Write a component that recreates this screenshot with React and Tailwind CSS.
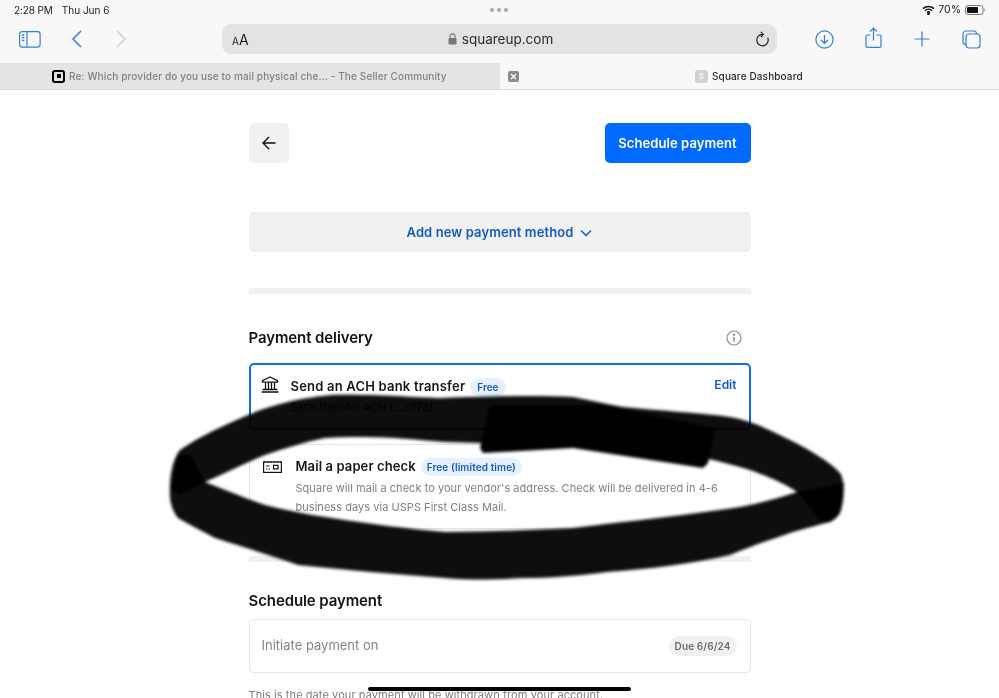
export default function App() {
  return (
    <div className="relative h-[698px] w-[999px] overflow-hidden bg-white font-['Inter',sans-serif]">
      {/* Browser chrome */}
      <header className="h-[90px] bg-[#f8f8f8] border-b border-[#d9d9d9] flex flex-col">
        <div className="h-[20px] pl-[14px] pr-[13px] flex items-center justify-between text-[10.5px] text-[#1c1c1c]">
          <div className="flex gap-[9px] w-[200px] text-[10px]"><span className="tracking-[-0.1px]">2:28 PM</span><span>Thu Jun 6</span></div>
          <div className="flex gap-[3px] -ml-[3px]">
            <span className="w-[4px] h-[4px] rounded-full bg-[#a8a8a8]" />
            <span className="w-[4px] h-[4px] rounded-full bg-[#a8a8a8]" />
            <span className="w-[4px] h-[4px] rounded-full bg-[#a8a8a8]" />
          </div>
          <div className="flex items-center justify-end gap-[3px] w-[200px]">
            <svg width="13" height="10" viewBox="0 0 13 10" fill="none" stroke="#111" strokeWidth="1.5">
              <path d="M1 3.6a8 8 0 0 1 11 0M3 5.7a5 5 0 0 1 7 0M5 7.6a2.2 2.2 0 0 1 3 0" />
              <circle cx="6.5" cy="9" r=".6" fill="#111" />
            </svg>
            <span>70%</span>
            <svg width="21" height="10" viewBox="0 0 21 10" className="ml-[1px]">
              <rect x=".5" y=".5" width="17.5" height="9" rx="2.5" fill="none" stroke="#777" />
              <rect x="2" y="2" width="11" height="6" rx="1" fill="#111" />
              <path d="M19.5 3.5c1 .3 1 2.7 0 3z" fill="#777" />
            </svg>
          </div>
        </div>
        <div className="h-[36px] mt-[1px] relative flex items-center">
          <div className="w-[222px] pl-[19px] flex items-center">
            <svg width="22" height="17" viewBox="0 0 22 17" fill="none" stroke="#2f80d8" strokeWidth="1.2">
              <rect x=".6" y=".6" width="20.5" height="15.5" rx="2.5" />
              <path d="M8 .6v15.5" />
              <path d="M2.8 4h2.6M2.8 6.7h2.6M2.8 9.4h2.6" strokeWidth="1.3" />
            </svg>
            <svg width="12" height="18" viewBox="0 0 12 18" fill="none" stroke="#2f80d8" strokeWidth="1.5" className="ml-[30px]">
              <path d="M10 1 2 9l8 8" />
            </svg>
            <svg width="12" height="18" viewBox="0 0 12 18" fill="none" stroke="#cfcfcf" strokeWidth="1.5" className="ml-[32px]">
              <path d="m2 1 8 8-8 8" />
            </svg>
          </div>
          <div className="w-[555px] h-[30px] rounded-[9px] bg-[#e3e3e3] flex items-center justify-between pl-[10px] pr-[8px] text-[#1f1f1f]">
            <span className="w-[60px] leading-none"><span className="text-[10px]">A</span><span className="text-[14px]">A</span></span>
            <span className="flex items-center gap-[5px] text-[13.5px] text-[#2b2b2b]">
              <svg width="9" height="12" viewBox="0 0 9 12">
                <path d="M2 5V3.4a2.5 2.5 0 0 1 5 0V5" fill="none" stroke="#777" strokeWidth="1.1" />
                <rect x="0.5" y="5" width="8" height="6.5" rx="1.2" fill="#777" />
              </svg>
              squareup.com
            </span>
            <span className="w-[60px] flex justify-end">
              <svg width="15" height="17" viewBox="0 0 15 17" fill="none" stroke="#222" strokeWidth="1.2">
                <path d="M8.5 3.4a5.7 5.7 0 1 0 5.2 3.4" />
                <path d="M6.8.8l2.6 2.6L6.8 6" />
              </svg>
            </span>
          </div>
          <div className="flex-1 flex items-center pl-[38px]">
            <svg width="19" height="19" viewBox="0 0 19 19" fill="none" stroke="#2f80d8" strokeWidth="1.2">
              <circle cx="9.5" cy="9.5" r="8.6" />
              <path d="M9.5 5v8.4M6 10l3.5 3.5L13 10" />
            </svg>
            <svg width="17" height="22" viewBox="0 0 17 22" fill="none" stroke="#2f80d8" strokeWidth="1.2" className="ml-[31px] -mt-[3px]">
              <path d="M8.5 13.5V1.4M5 4.6 8.5 1.2 12 4.6" />
              <path d="M5.5 8H2.6A1.6 1.6 0 0 0 1 9.6v9.2a1.6 1.6 0 0 0 1.6 1.6h11.8a1.6 1.6 0 0 0 1.6-1.6V9.6A1.6 1.6 0 0 0 14.4 8h-2.9" />
            </svg>
            <svg width="16" height="16" viewBox="0 0 16 16" fill="none" stroke="#2f80d8" strokeWidth="1.2" className="ml-[32px]">
              <path d="M8 .5v15M.5 8h15" />
            </svg>
            <svg width="19" height="19" viewBox="0 0 19 19" fill="none" stroke="#2f80d8" strokeWidth="1.2" className="ml-[32px]">
              <rect x="4" y="4" width="14" height="14" rx="3" />
              <path d="M4 14.6A3 3 0 0 1 1 11.6V4a3 3 0 0 1 3-3h7.6a3 3 0 0 1 3 3" />
            </svg>
          </div>
        </div>
        <div className="h-[26px] mt-[6px] flex text-[10px] font-medium tracking-[0.13px]">
          <div className="w-[500px] h-full bg-[#e4e4e4] flex items-center pl-[52px] text-[#808080]">
            <span className="w-[13px] h-[13px] rounded-[3px] bg-black flex items-center justify-center mr-[4px]">
              <span className="w-[9px] h-[9px] rounded-[1px] bg-[#e4e4e4] flex items-center justify-center">
                <span className="w-[4px] h-[4px] bg-black" />
              </span>
            </span>
            Re: Which provider do you use to mail physical che... - The Seller Community
          </div>
          <div className="flex-1 h-full flex items-center pl-[8px] relative">
            <span className="w-[11px] h-[11px] rounded-[2px] bg-[#8c8c8c] text-white flex items-center justify-center">
              <svg width="7" height="7" viewBox="0 0 7 7" stroke="#fff" strokeWidth="1.2"><path d="m1 1 5 5M6 1 1 6" /></svg>
            </span>
            <span className="ml-[176px] w-[13px] h-[13px] rounded-[3px] bg-[#d0d0d6] text-white text-[8px] flex items-center justify-center">S</span>
            <span className="ml-[4px] text-[#2a2a2a]">Square Dashboard</span>
          </div>
        </div>
      </header>

      {/* Page */}
      <main className="w-[502px] ml-[248.5px] pt-[33px]">
        <div className="flex justify-between">
          <div className="w-[40px] h-[40px] rounded-[5px] bg-[#f1f1f1] flex items-center justify-center">
            <svg width="14" height="14" viewBox="0 0 14 14" fill="none" stroke="#111" strokeWidth="1.4"><path d="M13.5 7H1M7 1 1 7l6 6" /></svg>
          </div>
          <div className="w-[146px] h-[40px] rounded-[5px] bg-[#006aff] text-white text-[13px] font-semibold tracking-[0.08px] pt-[1px] flex items-center justify-center">Schedule payment</div>
        </div>
        <div className="mt-[49px] h-[40px] rounded-[5px] bg-[#f1f1f1] pt-[1px] flex items-center justify-center gap-[7px] text-[13px] font-semibold text-[#0f5bc4] tracking-[0.1px]">
          Add new payment method
          <svg width="12" height="8" viewBox="0 0 12 8" fill="none" stroke="#0f5bc4" strokeWidth="1.5"><path d="m1 1.5 5 5 5-5" /></svg>
        </div>
        <div className="mt-[36px] h-[6px] bg-[#f1f1f1]" />

        <div className="mt-[34px] h-[20px] flex items-center justify-between pr-[9px]">
          <h2 className="text-[15px] font-semibold text-[#141414] tracking-[-0.1px]">Payment delivery</h2>
          <svg width="16" height="16" viewBox="0 0 16 16" fill="none" stroke="#8a8a8a" strokeWidth="1.2">
            <circle cx="8" cy="8" r="7" />
            <path d="M8 7v4.5" strokeWidth="1.5" />
            <circle cx="8" cy="4.6" r=".6" fill="#8a8a8a" />
          </svg>
        </div>

        <div className="mt-[15px] h-[67px] rounded-[5px] border-2 border-[#0d6fe8] pl-[10px] pr-[12px] pt-[11px] flex">
          <svg width="18" height="17" viewBox="0 0 18 17" fill="none" stroke="#111" strokeWidth="1.3" className="shrink-0">
            <path d="M9 1 1.5 4.6v1.6h15V4.6zM1.5 13.5h15M.6 16h16.8" />
            <path d="M4.5 6.5v7M7.5 6.5v7M10.5 6.5v7M13.5 6.5v7" />
          </svg>
          <div className="ml-[12px] flex-1">
            <div className="flex items-center h-[22px]">
              <span className="text-[13px] font-semibold text-[#171717] tracking-[0.2px]">Send an ACH bank transfer</span>
              <span className="ml-[5px] h-[18px] px-[7px] rounded-full bg-[#e6f0ff] text-[10px] font-semibold text-[#0f5bc4] flex items-center">Free</span>
            </div>
            <div className="mt-[1px] text-[11px] text-black">Bank transfer ACH (...3378)</div>
          </div>
          <span className="text-[12px] font-semibold text-[#0f5bc4]">Edit</span>
        </div>

        <div className="mt-[14px] h-[85px] rounded-[5px] border border-[#e6e6e6] pl-[13px] pr-[12px] pt-[11px] flex">
          <svg width="19" height="13" viewBox="0 0 19 13" fill="none" stroke="#111" strokeWidth="1.2" className="mt-[4px] shrink-0">
            <path d="M.8 1.8h1.5M4 1.8h1.5M7.2 1.8h1.5M10.4 1.8H12M13.6 1.8h1.5M16.7 1.8h1.5" />
            <rect x=".6" y="2" width="17.8" height="10.4" />
            <path d="M3 6h3.5M3 9h1.5M5.5 9h1.5" />
            <rect x="10.5" y="5.3" width="4.5" height="3.6" />
          </svg>
          <div className="ml-[14px] flex-1">
            <div className="flex items-center h-[22px]">
              <span className="text-[13px] font-semibold text-[#171717] tracking-[0.1px]">Mail a paper check</span>
              <span className="ml-[5px] h-[18px] px-[6px] rounded-full bg-[#e6f0ff] text-[10px] font-semibold text-[#0f5bc4] flex items-center tracking-[0.1px]">Free (limited time)</span>
            </div>
            <p className="mt-[1px] text-[11px] leading-[18.5px] text-[#7f7f7f] tracking-[0.04px]">Square will mail a check to your vendor's address. Check will be delivered in 4-6 business days via USPS First Class Mail.</p>
          </div>
        </div>

        <div className="mt-[27px] h-[6px] bg-[#f1f1f1]" />

        <h2 className="mt-[29px] h-[20px] flex items-center text-[15px] font-semibold text-[#141414] tracking-[-0.1px]">Schedule payment</h2>
        <div className="mt-[8px] h-[54px] rounded-[5px] border border-[#e4e4e4] pl-[12px] pr-[13px] flex items-center justify-between">
          <span className="text-[13px] text-[#858585]">Initiate payment on</span>
          <span className="h-[20px] px-[6px] rounded-full bg-[#f1f1f1] text-[10px] font-semibold text-[#6b6b6b] tracking-[0.1px] flex items-center">Due 6/6/24</span>
        </div>
        <p className="mt-[14px] text-[11px] text-[#7f7f7f] tracking-[0.08px]">This is the date your payment will be withdrawn from your account.</p>
      </main>

      {/* Hand-drawn scribble over the page */}
      <svg className="absolute left-0 top-0 pointer-events-none blur-[1.6px] mix-blend-multiply" width="999" height="698" viewBox="0 0 999 698">
        <path
          fillRule="evenodd"
          fill="#0e0e0e"
          d="M170 498C169 478 172 460 180 450C200 436 225 425 248 415C262 409 275 405 288 402C305 398 320 396 332 395C380 394 420 398 440 398C490 396 540 395 573 397C590 400 605 404 623 407C660 411 695 412 730 417C750 420 770 430 790 440C810 450 830 462 840 473C845 480 845 500 840 513C838 517 834 520 830 522C810 527 800 530 790 533C770 540 750 546 730 555C690 564 650 569 607 572C575 576 550 578 523 578C490 580 470 580 445 578C395 574 345 570 298 565C270 555 240 546 215 538C200 530 188 524 178 518C173 512 171 505 170 498Z M205 482C225 490 245 498 265 505C285 510 310 515 332 518C370 524 410 529 445 532C490 532 530 530 573 528C590 526 605 524 623 522C660 518 700 513 740 507C760 503 780 498 797 492C785 484 770 477 750 470C738 466 725 463 713 460C690 455 660 449 640 447C600 446 520 444 445 442C420 440 390 437 365 437C350 437 338 437 325 438C305 442 285 448 265 455C245 463 225 473 205 482Z"
        />
        <path fill="#000" d="M490 405L600 405L715 428L708 463L703 468L573 448L483 453L480 448Z" />
        <path fill="#000" d="M797 492L844 483L840 513L830 522L820 520Z" />
        <path fill="#000" d="M178 455L190 455L205 482L180 495L171 490Z" />
      </svg>

      {/* Home indicator */}
      <div className="absolute left-[368px] top-[687px] w-[263px] h-[4px] rounded-full bg-black" />
    </div>
  );
}
